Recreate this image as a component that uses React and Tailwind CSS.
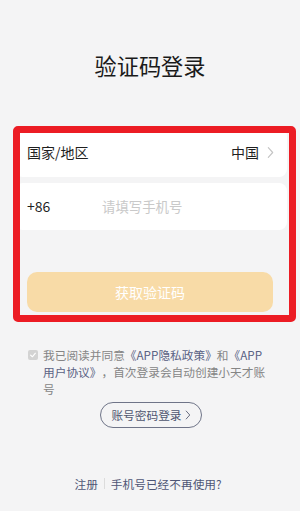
import React from "react";

function Chevron({ className, stroke = "#c4c4c4" }) {
  return (
    <svg className={className} viewBox="0 0 8 14" fill="none">
      <polyline points="1.5,1.5 6.5,7 1.5,12.5" stroke={stroke} strokeWidth="1.3" strokeLinecap="round" strokeLinejoin="round" />
    </svg>
  );
}

export default function App() {
  return (
    <div
      className="relative w-[300px] h-[511px] bg-[#f4f4f5] flex flex-col overflow-hidden [text-spacing-trim:space-all]"
      style={{ fontFamily: '"Noto Sans CJK SC", "Noto Sans", sans-serif' }}
    >
      <div className="pt-[50px] text-center text-[22.2px] leading-[30px] text-[#1a1a1a]">验证码登录</div>

      <div className="mt-[48px] flex flex-col">
        <div className="ml-[15px] mr-[13px] h-[49px] bg-white rounded-[8px] flex items-center justify-between pl-[12px] pr-[13px]">
          <span className="text-[14px] text-[#1f1f1f]">国家/地区</span>
          <div className="flex items-center gap-[8px]">
            <span className="text-[14px] text-[#1f1f1f]">中国</span>
            <Chevron className="w-[7px] h-[13px]" />
          </div>
        </div>
        <div className="mt-[6px] ml-[15px] mr-[13px] h-[47px] bg-white rounded-[8px] flex items-center pl-[12px]">
          <span className="w-[75px] text-[14px] text-[#1f1f1f]">+86</span>
          <span className="text-[13.4px] text-[#c9c9c9]">请填写手机号</span>
        </div>
        <div className="mt-[42px] mx-[27px] h-[40px] rounded-[10px] bg-[#f8dba7] flex items-center justify-center text-[14px] text-white">
          获取验证码
        </div>
      </div>

      <div className="mt-[34px] flex pl-[28px]">
        <div className="mt-[3.5px] w-[10px] h-[10px] rounded-[2px] bg-[#d3d3d3] flex items-center justify-center">
          <svg viewBox="0 0 10 10" className="w-[8px] h-[8px]" fill="none">
            <polyline points="2,5.2 4.2,7.2 8,2.8" stroke="#ffffff" strokeWidth="1.4" strokeLinecap="round" strokeLinejoin="round" />
          </svg>
        </div>
        <div className="ml-[5px] text-[11.7px] leading-[17px] text-[#858585]">
          <div className="whitespace-nowrap">
            我已阅读并同意<span className="text-[#5a6284]">《APP隐私政策》</span>和<span className="text-[#5a6284]">《APP</span>
          </div>
          <div className="whitespace-nowrap">
            <span className="text-[#5a6284]">用户协议》</span>，首次登录会自动创建小天才账
          </div>
          <div>号</div>
        </div>
      </div>

      <div className="mt-[5px] flex justify-center pl-[2px]">
        <div className="h-[26px] px-[10px] rounded-full border border-[#6f7488] flex items-center gap-[3px] text-[11.7px] text-[#4f5670]">
          <span>账号密码登录</span>
          <Chevron className="w-[6px] h-[10px]" stroke="#5f6578" />
        </div>
      </div>

      <div className="mt-[47px] flex items-center justify-center pr-[4px] text-[11.7px] leading-[17px] text-[#4f5675]">
        <span>注册</span>
        <span className="mx-[6px] w-px h-[11px] bg-[#dcdcdc]"></span>
        <span>手机号已经不再使用?</span>
      </div>

      <div className="pointer-events-none absolute left-[13px] top-[126px] w-[283px] h-[196px] border-[7px] border-[#ec1c24] rounded-[5px]"></div>
    </div>
  );
}
